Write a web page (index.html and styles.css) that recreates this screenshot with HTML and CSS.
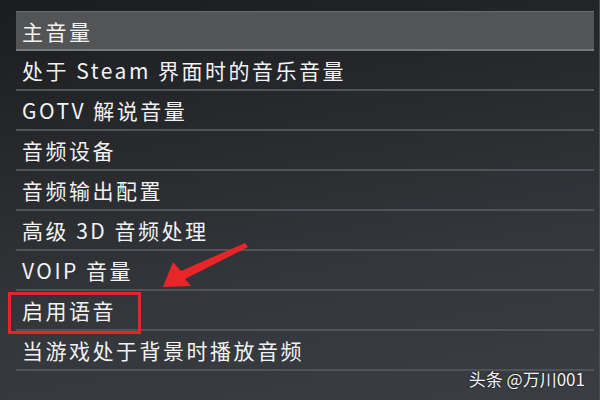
FILE: index.html
```html
<!DOCTYPE html>
<html lang="zh-CN">
<head>
    <meta charset="UTF-8">
    <title>音频设置</title>
    <link rel="stylesheet" href="styles.css">
</head>
<body>
    <div class="panel">
        <ul class="options">
            <li class="option active">主音量</li>
            <li class="option">处于 Steam 界面时的音乐音量</li>
            <li class="option">GOTV 解说音量</li>
            <li class="option">音频设备</li>
            <li class="option">音频输出配置</li>
            <li class="option">高级 3D 音频处理</li>
            <li class="option">VOIP 音量</li>
            <li class="option marked">启用语音</li>
            <li class="option">当游戏处于背景时播放音频</li>
        </ul>

        <!-- red annotation arrow -->
        <svg class="arrow" width="100" height="70" viewBox="0 0 100 70">
            <path d="M96 15 L93 11 L29 39 L21 30 L11 55 L39 54 L33 47 Z" fill="#e8262a"/>
        </svg>

        <div class="watermark">头条 @万川001</div>
    </div>
</body>
</html>
```

FILE: styles.css
```css
body {
    margin: 0;
    width: 600px;
    height: 400px;
    overflow: hidden;
    font-family: "Noto Sans CJK SC", "Noto Sans", sans-serif;
    background: linear-gradient(170deg, #1b1c1e 0%, #26282b 30%, #33363a 65%, #3a3d42 100%);
}

.panel {
    position: relative;
    height: 400px;
    padding: 11px 5px 0 16px;
    box-sizing: border-box;
    border-right: 1px solid #4a4c50;
}

.options {
    list-style: none;
    margin: 0;
    padding: 0;
}

.option {
    position: relative;
    height: 40px;
    box-sizing: border-box;
    border-bottom: 2px solid #505357;
    padding-left: 6px;
    display: flex;
    align-items: center;
    color: #f2f2f2;
    font-size: 21px;
    letter-spacing: 2.5px;
}

.option.active {
    background: #535456;
    border-top: 1px solid #6a6b6d;
    border-bottom-color: #75777a;
}

.option.marked::before {
    content: "";
    position: absolute;
    left: -8px;
    top: 1px;
    width: 127px;
    height: 36px;
    border: 3px solid #e3262c;
}

.arrow {
    position: absolute;
    left: 152px;
    top: 232px;
}

.watermark {
    position: absolute;
    right: 14px;
    bottom: 9px;
    color: #f4f4f4;
    font-size: 17px;
    text-shadow: 0 0 2px rgba(0, 0, 0, 0.8);
}
```
